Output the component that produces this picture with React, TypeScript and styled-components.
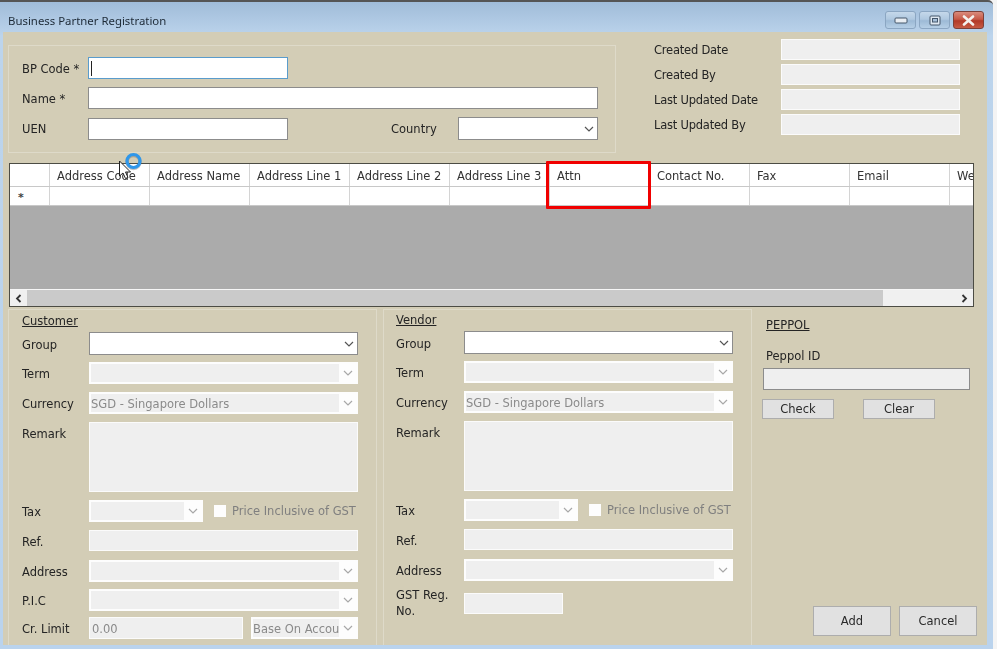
import React from "react";
import styled, { createGlobalStyle } from "styled-components";

const Global = createGlobalStyle`
  html, body { margin: 0; padding: 0; background: #f4f4f4; overflow: hidden; }
  * { box-sizing: border-box; }
`;

const Frame = styled.div`
  position: relative;
  width: 997px;
  height: 649px;
  overflow: hidden;
  font-family: "DejaVu Sans", sans-serif;
  font-size: 11.5px;
  color: #242424;
  filter: blur(0.3px);
`;

const Win = styled.div`
  width: 993px;
  height: 649px;
  display: flex;
  flex-direction: column;
  padding: 0 6px 4px 3px;
  background: linear-gradient(180deg, #a0bcd9 0, #bcd4ec 34px, #bad3ed 100%);
  border-top: 2px solid #555;
  border-top-right-radius: 5px;
`;

const TitleBar = styled.div`
  height: 30px;
  flex: none;
  display: flex;
  align-items: center;
  justify-content: space-between;
  padding: 9px 3px 3px 5px;
  font-family: "Noto Sans", sans-serif;
  font-size: 11.4px;
  color: #1d2a36;
`;

const WinButtons = styled.div`
  display: flex;
  gap: 3px;
`;

const WinButton = styled.div<{ $close?: boolean }>`
  width: 31px;
  height: 18px;
  display: flex;
  align-items: center;
  justify-content: center;
  border: 1px solid ${(p) => (p.$close ? "#7d4038" : "#8ba6c2")};
  border-radius: 3px;
  background: ${(p) =>
    p.$close
      ? "linear-gradient(180deg,#d98b7c 0,#c75a48 45%,#b23a28 55%,#c65a44 100%)"
      : "linear-gradient(180deg,#c5d8ea 0,#afc8e0 45%,#9dbad6 55%,#b6cfe6 100%)"};
`;

const Body = styled.div`
  flex: 1;
  min-height: 0;
  display: flex;
  flex-direction: column;
  background: #d3cdb6;
  overflow: hidden;
`;

const TopSection = styled.div`
  height: 131px;
  flex: none;
  display: flex;
  align-items: flex-start;
  padding: 7px 0 0 5px;
`;

const GroupBox = styled.div`
  width: 608px;
  height: 108px;
  margin-top: 6px;
  padding: 11px 0 0 13px;
  border: 1px solid #dedac9;
  display: flex;
  flex-direction: column;
  gap: 8px;
`;

const FormRow = styled.div<{ $mt?: number }>`
  display: flex;
  align-items: center;
  margin-top: ${(p) => p.$mt ?? 0}px;
`;

const Label = styled.div<{ $w?: number; $ml?: number }>`
  width: ${(p) => p.$w ?? 67}px;
  flex: none;
  margin-left: ${(p) => p.$ml ?? 0}px;
  white-space: pre-line;
  line-height: 16px;
`;

const FieldLabel = styled(Label)`
  padding-top: 2px;
`;

const TopLabel = styled(Label)`
  align-self: flex-start;
  padding-top: 4px;
`;

const MetaLabel = styled(Label)`
  letter-spacing: -0.22px;
`;

const TextInput = styled.div<{ $w: number; $h?: number; $focus?: boolean }>`
  width: ${(p) => p.$w}px;
  height: ${(p) => p.$h ?? 22}px;
  flex: none;
  display: flex;
  align-items: center;
  padding-left: 2px;
  background: #fff;
  border: 1px solid ${(p) => (p.$focus ? "#5a9ccc" : "#8c8c8c")};
`;

const Caret = styled.div`
  width: 1px;
  height: 15px;
  background: #222;
`;

const ReadOnly = styled.div<{ $w: number; $h?: number; $ml?: number }>`
  width: ${(p) => p.$w}px;
  height: ${(p) => p.$h ?? 21}px;
  flex: none;
  display: flex;
  align-items: center;
  padding: 2px 0 0 2px;
  margin-left: ${(p) => p.$ml ?? 0}px;
  color: #8a8a8a;
  background: #efefef;
  border: 1px solid #fbfbfb;
`;

const Combo = styled.div<{ $w: number; $h?: number }>`
  width: ${(p) => p.$w}px;
  height: ${(p) => p.$h ?? 22}px;
  flex: none;
  display: flex;
  align-items: center;
  justify-content: flex-end;
  padding-right: 3px;
  background: #fff;
  border: 1px solid #8c8c8c;
`;

const DisabledCombo = styled.div<{ $w: number; $ml?: number }>`
  width: ${(p) => p.$w}px;
  height: 22px;
  flex: none;
  margin-left: ${(p) => p.$ml ?? 0}px;
  display: flex;
  align-items: stretch;
  padding: 2px;
  background: #fdfdfd;
  color: #8a8a8a;
`;

const ComboFace = styled.div`
  flex: 1;
  min-width: 0;
  display: flex;
  align-items: center;
  padding-top: 1px;
  background: #efefef;
  white-space: nowrap;
  overflow: hidden;
`;

const ComboArrow = styled.div`
  width: 17px;
  flex: none;
  display: flex;
  align-items: center;
  justify-content: center;
`;

const Meta = styled.div`
  margin-left: 38px;
  display: flex;
  flex-direction: column;
  gap: 4px;
`;

const DataGrid = styled.div`
  width: 965px;
  height: 144px;
  flex: none;
  margin-left: 6px;
  display: flex;
  flex-direction: column;
  border: 1px solid #4c4c44;
  background: #ababab;
  overflow: hidden;
`;

const GridRow = styled.div<{ $h: number }>`
  height: ${(p) => p.$h}px;
  flex: none;
  display: flex;
  background: #fff;
  border-bottom: 1px solid #c8c8c8;
`;

const GridCell = styled.div<{ $w: number }>`
  width: ${(p) => p.$w}px;
  flex: none;
  display: flex;
  align-items: center;
  padding: 2px 0 0 7px;
  white-space: nowrap;
  overflow: hidden;
  border-right: 1px solid #d4d4d4;
  color: #333;
`;

const RowMark = styled.div`
  width: 40px;
  flex: none;
  padding: 2px 0 0 8px;
  font-size: 11px;
  font-weight: 700;
  line-height: 18px;
  color: #444;
  border-right: 1px solid #d4d4d4;
`;

const GridFill = styled.div`
  flex: 1;
`;

const ScrollBar = styled.div`
  height: 17px;
  flex: none;
  display: flex;
  background: #f0f0f0;
  border-top: 1px solid #f6f6f6;
`;

const ScrollButton = styled.div`
  width: 17px;
  flex: none;
  display: flex;
  align-items: center;
  justify-content: center;
`;

const ScrollThumb = styled.div`
  width: 856px;
  flex: none;
  background: #cacaca;
`;

const ScrollSpace = styled.div`
  flex: 1;
`;

const Panels = styled.div`
  flex: 1;
  min-height: 0;
  display: flex;
  margin-top: 2px;
  padding-left: 5px;
`;

const Panel = styled.div<{ $pt: number; $pl: number; $ml?: number }>`
  width: 369px;
  flex: none;
  margin-left: ${(p) => p.$ml ?? 0}px;
  padding: ${(p) => p.$pt}px 0 0 ${(p) => p.$pl}px;
  border: 1px solid #dedac9;
  border-bottom: none;
  overflow: hidden;
`;

const SectionTitle = styled.div`
  height: 16px;
  line-height: 16px;
  padding-top: 1px;
  text-decoration: underline;
  margin-bottom: 4px;
`;

const CheckBox = styled.div`
  width: 12px;
  height: 12px;
  flex: none;
  margin-left: 11px;
  background: #fdfdfd;
`;

const MutedText = styled.div`
  margin-left: 6px;
  color: #7f7f7f;
  white-space: nowrap;
`;

const PeppolPanel = styled.div`
  flex: 1;
  min-width: 0;
  display: flex;
  flex-direction: column;
  padding: 7px 10px 9px 10px;
`;

const PeppolTitle = styled(SectionTitle)`
  margin: 0 0 0 4px;
`;

const PeppolLabel = styled.div`
  margin: 16px 0 4px 4px;
  line-height: 16px;
`;

const PeppolInput = styled.div`
  width: 207px;
  height: 22px;
  margin-left: 1px;
  background: #efefef;
  border: 1px solid #8c8c8c;
`;

const ActionButton = styled.div<{ $w: number; $h: number }>`
  width: ${(p) => p.$w}px;
  height: ${(p) => p.$h}px;
  flex: none;
  display: flex;
  align-items: center;
  justify-content: center;
  background: #e1e1e1;
  border: 1px solid #adadad;
  color: #2a2a2a;
`;

const CheckRow = styled.div`
  display: flex;
  gap: 29px;
  margin-top: 9px;
`;

const Footer = styled.div`
  margin-top: auto;
  display: flex;
  justify-content: flex-end;
  gap: 8px;
`;

const HighlightBox = styled.div`
  position: absolute;
  left: 546px;
  top: 161px;
  width: 105px;
  height: 48px;
  border: 3px solid #f00000;
  border-radius: 1px;
`;

const Cursor = styled.svg`
  position: absolute;
  left: 118px;
  top: 150px;
`;

const Chevron = ({ muted }: { muted?: boolean }) => (
  <svg width="10" height="6" viewBox="0 0 10 6">
    <path d="M1 1l4 4 4-4" fill="none" stroke={muted ? "#a8a8a8" : "#555"} strokeWidth="1.2" />
  </svg>
);

const Arrow = ({ right }: { right?: boolean }) => (
  <svg width="7" height="9" viewBox="0 0 7 9">
    <path d={right ? "M1.5 1l3.5 3.5L1.5 8" : "M5.5 1L2 4.5 5.5 8"} fill="none" stroke="#333" strokeWidth="1.8" />
  </svg>
);

const DCombo = ({ w, text, ml }: { w: number; text?: string; ml?: number }) => (
  <DisabledCombo $w={w} $ml={ml}>
    <ComboFace>{text}</ComboFace>
    <ComboArrow>
      <Chevron muted />
    </ComboArrow>
  </DisabledCombo>
);

const EnabledCombo = ({ w, h }: { w: number; h?: number }) => (
  <Combo $w={w} $h={h}>
    <Chevron />
  </Combo>
);

const columns = [
  "Address Code",
  "Address Name",
  "Address Line 1",
  "Address Line 2",
  "Address Line 3",
  "Attn",
  "Contact No.",
  "Fax",
  "Email",
  "Website",
];
const metaRows = ["Created Date", "Created By", "Last Updated Date", "Last Updated By"];

export default function App() {
  return (
    <Frame>
      <Global />
      <Win>
        <TitleBar>
          <span>Business Partner Registration</span>
          <WinButtons>
            <WinButton>
              <svg width="14" height="8" viewBox="0 0 14 8">
                <rect x="1" y="2" width="12" height="5" rx="1" fill="#e8edf2" stroke="#44566a" />
              </svg>
            </WinButton>
            <WinButton>
              <svg width="12" height="11" viewBox="0 0 12 11">
                <rect x="1" y="1" width="10" height="9" rx="1" fill="#dfe8f1" stroke="#44566a" />
                <rect x="3.5" y="3.5" width="5" height="3.5" fill="#a7c0d9" stroke="#44566a" />
              </svg>
            </WinButton>
            <WinButton $close>
              <svg width="13" height="11" viewBox="0 0 13 11">
                <path d="M2 1.5l9 8M11 1.5l-9 8" stroke="#f4f1ee" strokeWidth="2.6" strokeLinecap="round" />
              </svg>
            </WinButton>
          </WinButtons>
        </TitleBar>
        <Body>
          <TopSection>
            <GroupBox>
              <FormRow>
                <FieldLabel $w={66}>BP Code *</FieldLabel>
                <TextInput $w={200} $focus>
                  <Caret />
                </TextInput>
              </FormRow>
              <FormRow>
                <FieldLabel $w={66}>Name *</FieldLabel>
                <TextInput $w={510} />
              </FormRow>
              <FormRow>
                <Label $w={66}>UEN</Label>
                <TextInput $w={200} />
                <Label $ml={103}>Country</Label>
                <EnabledCombo w={140} h={23} />
              </FormRow>
            </GroupBox>
            <Meta>
              {metaRows.map((m) => (
                <FormRow key={m}>
                  <MetaLabel $w={127}>{m}</MetaLabel>
                  <ReadOnly $w={179} />
                </FormRow>
              ))}
            </Meta>
          </TopSection>

          <DataGrid>
            <GridRow $h={23}>
              <GridCell $w={40} />
              {columns.map((c) => (
                <GridCell key={c} $w={100}>
                  {c}
                </GridCell>
              ))}
            </GridRow>
            <GridRow $h={19}>
              <RowMark>*</RowMark>
              {columns.map((c) => (
                <GridCell key={c} $w={100} />
              ))}
            </GridRow>
            <GridFill />
            <ScrollBar>
              <ScrollButton>
                <Arrow />
              </ScrollButton>
              <ScrollThumb />
              <ScrollSpace />
              <ScrollButton>
                <Arrow right />
              </ScrollButton>
            </ScrollBar>
          </DataGrid>

          <Panels>
            <Panel $pt={2} $pl={13}>
              <SectionTitle>Customer</SectionTitle>
              <FormRow>
                <FieldLabel>Group</FieldLabel>
                <EnabledCombo w={269} h={23} />
              </FormRow>
              <FormRow $mt={7}>
                <FieldLabel>Term</FieldLabel>
                <DCombo w={269} />
              </FormRow>
              <FormRow $mt={8}>
                <FieldLabel>Currency</FieldLabel>
                <DCombo w={269} text="SGD - Singapore Dollars" />
              </FormRow>
              <FormRow $mt={8}>
                <TopLabel>Remark</TopLabel>
                <ReadOnly $w={269} $h={70} />
              </FormRow>
              <FormRow $mt={8}>
                <FieldLabel>Tax</FieldLabel>
                <DCombo w={114} />
                <CheckBox />
                <MutedText>Price Inclusive of GST</MutedText>
              </FormRow>
              <FormRow $mt={8}>
                <FieldLabel>Ref.</FieldLabel>
                <ReadOnly $w={269} />
              </FormRow>
              <FormRow $mt={9}>
                <FieldLabel>Address</FieldLabel>
                <DCombo w={269} />
              </FormRow>
              <FormRow $mt={7}>
                <FieldLabel>P.I.C</FieldLabel>
                <DCombo w={269} />
              </FormRow>
              <FormRow $mt={6}>
                <FieldLabel>Cr. Limit</FieldLabel>
                <ReadOnly $w={154} $h={22}>0.00</ReadOnly>
                <DCombo w={107} ml={8} text="Base On Account" />
              </FormRow>
            </Panel>

            <Panel $pt={1} $pl={12} $ml={6}>
              <SectionTitle>Vendor</SectionTitle>
              <FormRow>
                <FieldLabel $w={68}>Group</FieldLabel>
                <EnabledCombo w={269} h={23} />
              </FormRow>
              <FormRow $mt={7}>
                <FieldLabel $w={68}>Term</FieldLabel>
                <DCombo w={269} />
              </FormRow>
              <FormRow $mt={8}>
                <FieldLabel $w={68}>Currency</FieldLabel>
                <DCombo w={269} text="SGD - Singapore Dollars" />
              </FormRow>
              <FormRow $mt={8}>
                <TopLabel $w={68}>Remark</TopLabel>
                <ReadOnly $w={269} $h={70} />
              </FormRow>
              <FormRow $mt={8}>
                <FieldLabel $w={68}>Tax</FieldLabel>
                <DCombo w={114} />
                <CheckBox />
                <MutedText>Price Inclusive of GST</MutedText>
              </FormRow>
              <FormRow $mt={8}>
                <FieldLabel $w={68}>Ref.</FieldLabel>
                <ReadOnly $w={269} />
              </FormRow>
              <FormRow $mt={9}>
                <FieldLabel $w={68}>Address</FieldLabel>
                <DCombo w={269} />
              </FormRow>
              <FormRow $mt={6}>
                <Label $w={68}>{"GST Reg.\nNo."}</Label>
                <ReadOnly $w={99} />
              </FormRow>
            </Panel>

            <PeppolPanel>
              <PeppolTitle>PEPPOL</PeppolTitle>
              <PeppolLabel>Peppol ID</PeppolLabel>
              <PeppolInput />
              <CheckRow>
                <ActionButton $w={72} $h={20}>Check</ActionButton>
                <ActionButton $w={72} $h={20}>Clear</ActionButton>
              </CheckRow>
              <Footer>
                <ActionButton $w={78} $h={30}>Add</ActionButton>
                <ActionButton $w={78} $h={30}>Cancel</ActionButton>
              </Footer>
            </PeppolPanel>
          </Panels>
        </Body>
      </Win>

      <HighlightBox />
      <Cursor width="30" height="34" viewBox="0 0 30 34">
        <circle cx="15.5" cy="12" r="6.5" fill="none" stroke="#555" strokeOpacity="0.35" strokeWidth="3.4" />
        <circle cx="15.5" cy="11" r="6.5" fill="none" stroke="#2f97ea" strokeWidth="3.2" />
        <path d="M1.5 11v15l3.5-3 2.5 5.5 2.5-1-2.5-5.5h5z" fill="#fff" stroke="#222" strokeWidth="1" />
      </Cursor>
    </Frame>
  );
}
